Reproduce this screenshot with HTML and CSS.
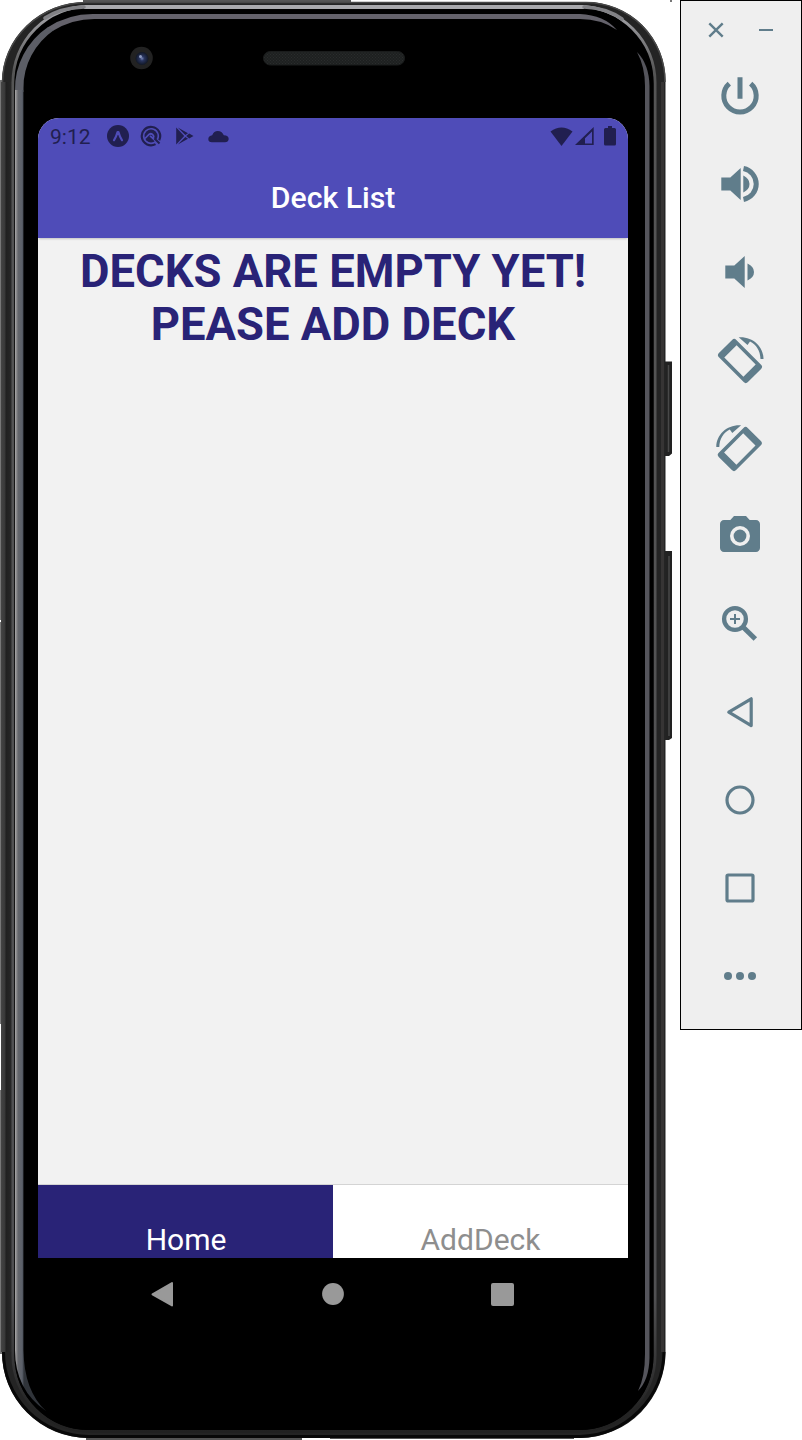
FILE: index.html
```html
<!DOCTYPE html>
<html lang="en">
<head>
<meta charset="utf-8">
<title>Deck List</title>
<link rel="stylesheet" href="styles.css">
</head>
<body>
<main class="emulator">
  <section class="device">
    <svg class="bezel" width="680" height="1440" viewBox="0 0 680 1440" aria-hidden="true">
      <defs>
        <linearGradient id="rim" x1="0" y1="0" x2="0" y2="1440" gradientUnits="userSpaceOnUse">
          <stop offset="0" stop-color="#b4b4b8"/><stop offset=".015" stop-color="#98989c"/><stop offset=".05" stop-color="#555"/><stop offset=".9" stop-color="#505052"/><stop offset=".98" stop-color="#242424"/><stop offset="1" stop-color="#202020"/>
        </linearGradient>
        <linearGradient id="glow" x1="15" y1="0" x2="24" y2="0" gradientUnits="userSpaceOnUse">
          <stop offset="0" stop-color="#aaa8a8"/><stop offset=".35" stop-color="#65676c"/><stop offset=".8" stop-color="#5b606a"/><stop offset="1" stop-color="#30343a"/>
        </linearGradient>
        <linearGradient id="side" x1="0" y1="0" x2="15" y2="0" gradientUnits="userSpaceOnUse">
          <stop offset="0" stop-color="#484848"/><stop offset=".33" stop-color="#383838"/><stop offset=".4" stop-color="#202020"/><stop offset="1" stop-color="#2c2c2c"/>
        </linearGradient>
        <radialGradient id="lens"><stop offset="0" stop-color="#7583b5"/><stop offset=".35" stop-color="#29355f"/><stop offset="1" stop-color="#111725"/></radialGradient>
        <pattern id="mesh" width="3" height="3" patternUnits="userSpaceOnUse"><path fill="#1e2020" d="M0 0h3v3H0z"/><path fill="#2a2d2d" d="M0 0h1v1H0zM1.500 1.500h1v1h-1z"/></pattern>
      </defs>
      <path fill="#777" d="M0 80h2v540H0zM0 622h2v402H0zM0 1090h2v264H0z"/>
      <path fill="#555" d="M83 0h268v3H83zM86 1437h216v3H86zM330 1437h244v2H330z"/>
      <path fill="#777" d="M670 0h2v2h-2z"/>
      <path fill="#222" d="M665 361.500h7v92l-3 2.500h-4zM665 551h7v187l-3 2h-4z"/>
      <path fill="none" stroke="#484848" stroke-width="1.500" d="M668.500 365v87M669 556v180"/>
      <path fill="#242424" d="M86 2H586A79 79 0 0 1 665.500 82V1350A86 86 0 0 1 580 1438H88A86 86 0 0 1 2 1352V82A84 80 0 0 1 86 2z"/>
      <path fill="url(#side)" d="M1 82H14V1352H1z"/>
      <path fill="#363434" d="M661 82h3v1270h-3z"/>
      <path fill="none" stroke="#484848" stroke-width="1.500" d="M2.500 82A84 80 0 0 1 86 2.500H586A79 79 0 0 1 665 82"/>
      <path fill="none" stroke="#080808" stroke-width="3" d="M3.500 1352A86 84 0 0 0 88 1436.500H580A86 86 0 0 0 664 1352"/>
      <rect x="13" y="6.500" width="642" height="1425" rx="76" fill="#000" stroke="url(#rim)" stroke-width="3"/>
      <path fill="none" stroke="#a9a9ad" stroke-width="4" d="M84 7H584"/>
      <path fill="none" stroke="#828286" stroke-width="3.500" stroke-linecap="round" d="M84 7Q60 8 45 18M584 7Q607 8 622 19"/>
      <rect x="14.500" y="10" width="639" height="1420" rx="74" fill="#000"/>
      <path fill="#5c5e66" d="M15 90A80 76 0 0 1 48 27L54 30A75 71 0 0 0 23.500 88V92H15z"/>
      <path fill="url(#glow)" d="M15 90H23.500V1350Q24 1391 46 1411Q15 1390 15 1350z"/>
      <path fill="#64626b" d="M47.500 27.500A80 76 0 0 1 95 14H580Q604 15 617 30Q601 19 580 19H98A75 71 0 0 0 53.500 30.500z"/>
      <path fill="#55555c" d="M637 52Q649 64 649.500 86V1358Q649 1380 638 1391Q645 1377 645 1354V86Q645 67 637 52z"/>
      <circle cx="141.500" cy="58" r="11.300" fill="#222"/>
      <circle cx="142" cy="58.500" r="6.500" fill="url(#lens)"/>
      <circle cx="140.500" cy="56.500" r="1.500" fill="#8e9bc0"/>
      <rect x="263.500" y="51.500" width="141" height="13.500" rx="6.700" fill="url(#mesh)" stroke="#1a1c1c"/>
    </svg>
    <div class="screen">
      <div class="status">
        <span class="clock">9:12</span>
        <svg class="status-icon expo" width="22" height="22" viewBox="0 0 22 22"><circle cx="11" cy="11" r="11" fill="currentColor"/><path d="M7 15.200Q9.500 11 10.500 7.200h1Q12.500 11 15 15.200" fill="none" stroke="#4f4cb8" stroke-width="2.200" stroke-linecap="round" stroke-linejoin="round"/></svg>
        <svg class="status-icon" width="22" height="22" viewBox="0 0 22 22"><path fill="none" stroke="currentColor" stroke-width="2.200" d="M15.500 19.100A9.200 9.200 0 1 1 19.200 15.200"/><circle cx="11" cy="11" r="6.500" fill="currentColor"/><path fill="none" stroke="#4f4cb8" stroke-width="1.700" d="M5 13.500L9 9.500Q11.300 7.800 13 10T12.500 13L10 10.800M12.500 13L18 18"/><path stroke="currentColor" stroke-width="2" d="M14.500 13.500L19.500 18.500"/></svg>
        <svg class="status-icon play" width="18" height="18" viewBox="0 0 18 18"><path fill="currentColor" d="M.2.6L8.200 9 .2 17.400zM1.800.5L12 6.200 9.300 8.100zM1.800 17.500L12 11.800 9.300 9.900zM10.200 9L13.200 6.500 17.500 9 13.200 11.500z"/></svg>
        <svg class="status-icon cloud" width="21" height="13" viewBox="0 0 21 13"><path fill="currentColor" d="M4 12.300Q.3 12.300 .3 9 .5 5.800 4.200 5.200 6 1 9.700 1 14 1 15.800 5.300 20.700 5.500 20.700 9 20.200 12.300 17 12.300z"/></svg>
        <svg class="status-icon wifi" width="23" height="19" viewBox="0 0 23 19"><path fill="currentColor" d="M.5 4.500Q11.500-3.500 22.500 4.500L11.500 19z"/></svg>
        <svg class="status-icon signal" width="19" height="18" viewBox="0 0 19 18"><path fill="currentColor" fill-rule="evenodd" d="M0 18L18.700 0V18zM10 16.500h7V4.500L10 11.200z"/></svg>
        <svg class="status-icon battery" width="12" height="20" viewBox="0 0 12 20"><path fill="currentColor" d="M4 0h4v2h2.500Q12 2 12 3.500v14.500Q12 19.500 10.500 19.500h-9Q0 19.500 0 18V3.500Q0 2 1.500 2H4z"/></svg>
      </div>
      <header class="title">Deck List</header>
      <div class="content"><h1 class="empty">DECKS ARE EMPTY YET!<br>PEASE ADD DECK</h1></div>
      <nav class="tabs"><div class="tab active">Home</div><div class="tab">AddDeck</div></nav>
    </div>
    <div class="softkeys">
      <svg width="24" height="26" viewBox="0 0 24 26"><path fill="#999" stroke="#999" stroke-width="2" stroke-linejoin="round" d="M2.500 13.300L22 2V24.500z"/></svg>
      <svg width="22" height="22" viewBox="0 0 22 22"><circle cx="11" cy="11" r="10.900" fill="#999"/></svg>
      <svg width="23" height="23" viewBox="0 0 23 23"><rect width="23" height="23" rx="2" fill="#999"/></svg>
    </div>
  </section>
  <aside class="toolbar">
    <div class="window-controls">
      <svg width="16" height="16" viewBox="0 0 16 16"><path class="line" stroke-width="2.400" d="M1.300 1.300L14.700 14.700M14.700 1.300L1.300 14.700"/></svg>
      <svg width="16" height="16" viewBox="0 0 16 16"><path class="line" stroke-width="2" d="M1 8h14"/></svg>
    </div>
    <div class="tool"><svg class="icon" viewBox="0 0 48 48"><path class="line" stroke-width="5" d="M13.300 11.600A16.200 16.200 0 1 0 34.700 11.600M24 5.300V26.700"/></svg></div>
    <div class="tool"><svg class="icon" viewBox="0 0 48 48"><path d="M5.300 17.500h9L24.700 8V40L14.300 30.500h-9zM27.300 15.500Q33.500 18.500 33.500 24T27.300 32.500z"/><path class="line" stroke-width="5" d="M27.500 8.500A15.800 15.800 0 0 1 27.500 39.500"/></svg></div>
    <div class="tool"><svg class="icon" viewBox="0 0 48 48"><path d="M9.300 17.500h9L28.700 8V40L18.300 30.500h-9zM31.500 15.500Q38 18.500 38 24T31.500 32.500z"/></svg></div>
    <div class="tool"><svg class="icon" viewBox="0 0 48 48"><path fill-rule="evenodd" transform="translate(24 25) rotate(45)" d="M-17.500-12.300h35q3 0 3 3v18.600q0 3-3 3h-35q-3 0-3-3V-9.300q0-3 3-3zM-13.500-8.700v17.400h27V-8.700z"/><path d="M22.700 1.300C36 .3 47.500 10 47.500 23H44.500C44.300 14.500 40 8.500 34 5.500L31.500 9z"/></svg></div>
    <div class="tool"><svg class="icon" viewBox="0 0 48 48"><g transform="matrix(-1 0 0 1 47.800 0)"><path fill-rule="evenodd" transform="translate(24 25) rotate(45)" d="M-17.500-12.300h35q3 0 3 3v18.600q0 3-3 3h-35q-3 0-3-3V-9.300q0-3 3-3zM-13.500-8.700v17.400h27V-8.700z"/><path d="M22.700 1.300C36 .3 47.500 10 47.500 23H44.500C44.300 14.500 40 8.500 34 5.500L31.500 9z"/></g></svg></div>
    <div class="tool"><svg class="icon" viewBox="0 0 24 24"><path fill-rule="evenodd" d="M9 2L7.170 4H4c-1.100 0-2 .9-2 2v12c0 1.100.9 2 2 2h16c1.100 0 2-.9 2-2V6c0-1.100-.9-2-2-2h-3.170L15 2zM12 7a5 5 0 1 0 0 10a5 5 0 0 0 0-10z"/><circle cx="12" cy="12" r="3.200"/></svg></div>
    <div class="tool"><svg class="icon" viewBox="0 0 48 48"><circle class="line" cx="19" cy="19" r="10.900" stroke-width="4.300"/><path class="line" stroke-width="2" d="M14 19h10M19 14v10"/><path class="line" stroke-width="5" d="M27 27L39.300 39"/></svg></div>
    <div class="tool"><svg class="icon" viewBox="0 0 48 48"><path class="line" stroke-width="3.200" stroke-linejoin="round" d="M12.800 24.200L35.200 10.800V37.600z"/></svg></div>
    <div class="tool"><svg class="icon" viewBox="0 0 48 48"><circle class="line" cx="24" cy="24" r="13" stroke-width="3.200"/></svg></div>
    <div class="tool"><svg class="icon" viewBox="0 0 48 48"><rect class="line" x="11" y="11" width="26" height="26" rx="1.200" stroke-width="3.200"/></svg></div>
    <div class="tool"><svg class="icon" viewBox="0 0 48 48"><circle cx="12" cy="24" r="4"/><circle cx="24" cy="24" r="4"/><circle cx="36" cy="24" r="4"/></svg></div>
  </aside>
</main>
</body>
</html>
```
FILE: styles.css
```css
* { box-sizing: border-box; }
body { margin: 0; background: #fff; font-family: Roboto, sans-serif; }
svg { display: block; flex: none; }
.emulator { display: flex; align-items: flex-start; width: 802px; height: 1440px; overflow: hidden; }
.device { position: relative; width: 680px; height: 1440px; padding: 118px 52px 0 38px; }
.bezel { position: absolute; top: 0; left: 0; }
.screen { position: relative; display: flex; flex-direction: column; height: 1140px; overflow: hidden; border-radius: 21px 21px 0 0; background: #f2f2f2; }
.status { display: flex; align-items: center; height: 36px; padding: 0 12px; background: #4f4cb8; color: #211f50; }
.clock { width: 57px; font-size: 21px; line-height: 36px; padding-top: 2px; }
.expo { margin-right: 11px; }
.play { margin-left: 14px; }
.cloud { margin-left: 14px; }
.wifi { margin-left: auto; }
.signal { margin-left: 2px; }
.battery { margin-left: 10px; }
.title { height: 84px; flex: none; background: #4f4cb8; color: #fff; font-size: 30.2px; font-weight: 500; line-height: 88px; text-align: center; box-shadow: 0 2px 2px -1px rgba(0,0,0,.2); }
.content { flex: 1; padding-top: 7px; }
.empty { margin: 0; color: #292377; font-size: 45.4px; font-weight: 700; line-height: 53px; text-align: center; white-space: nowrap; }
.tabs { display: grid; grid-template-columns: 1fr 1fr; height: 74px; border-top: 1px solid #d4d4d4; background: #fff; }
.tab { padding-top: 37px; color: #8e8e8e; font-size: 30px; line-height: 36px; text-align: center; }
.active { padding-left: 1px; background: #292377; color: #fff; }
.softkeys { position: relative; display: flex; align-items: center; justify-content: space-between; height: 72px; padding: 0 114px 0 112px; }
.toolbar { width: 122px; height: 1030px; border: 1px solid #000; background: #efefef; color: #607d8b; }
.window-controls { display: flex; gap: 34px; height: 51px; padding: 21px 0 0 27px; }
.tool { display: flex; align-items: center; justify-content: center; height: 88px; padding-right: 2px; }
.icon { width: 48px; height: 48px; fill: currentColor; }
.line { fill: none; stroke: currentColor; }
```
